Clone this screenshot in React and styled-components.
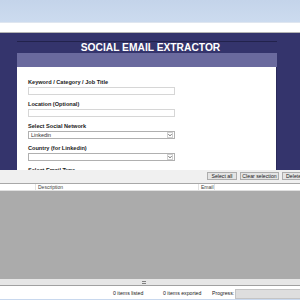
import styled, { createGlobalStyle } from "styled-components";

const FONT = `"Liberation Sans", Arial, sans-serif`;

const GlobalStyle = createGlobalStyle`
	*, *::before, *::after {
		box-sizing: border-box;
	}
	html, body {
		margin: 0;
		padding: 0;
		width: 300px;
		height: 300px;
		overflow: hidden;
		background: #ffffff;
		font-family: ${FONT};
	}
`;

const FIELDS = [
	{ label: "Keyword / Category / Job Title", kind: "input" },
	{ label: "Location (Optional)", kind: "input" },
	{ label: "Select Social Network", kind: "select", value: "Linkedin" },
	{ label: "Country (for Linkedin)", kind: "select", value: "" },
	{ label: "Select Email Type", kind: "input" },
];

function Chevron() {
	return (
		<svg width="5" height="4" viewBox="0 0 5 4">
			<path d="M0.5 1 L2.5 3 L4.5 1" fill="none" stroke="#404040" strokeWidth="1" />
		</svg>
	);
}

export default function App() {
	return (
		<Window>
			<GlobalStyle />
			<TitleBar />
			<MenuStrip />

			<Stage>
				<Panel>
					<Title>SOCIAL EMAIL EXTRACTOR</Title>
					<SubBand />
					<Form>
						{FIELDS.map((f) => (
							<Field key={f.label}>
								<Label>{f.label}</Label>
								{f.kind === "input" ? (
									<TextBox />
								) : (
									<SelectBox>
										<span>{f.value}</span>
										<ArrowBox>
											<Chevron />
										</ArrowBox>
									</SelectBox>
								)}
							</Field>
						))}
					</Form>
				</Panel>
			</Stage>

			<Toolbar>
				<ToolButton width="30px">Select all</ToolButton>
				<ToolButton width="39px">Clear selection</ToolButton>
				<ToolButton width="44px">Delete selected</ToolButton>
			</Toolbar>

			<ColumnHeader>
				<Column width="36px" />
				<Column width="163px">Description</Column>
				<Column>Email</Column>
			</ColumnHeader>

			<ListArea />

			<Splitter>
				<Grip />
			</Splitter>

			<StatusBar>
				<StatusText width="113px" />
				<StatusText width="50px">0 items listed</StatusText>
				<StatusText width="49px">0 items exported</StatusText>
				<StatusText width="23px">Progress:</StatusText>
				<Progress />
			</StatusBar>

			<BottomStrip />
		</Window>
	);
}

const Window = styled.div`
	width: 300px;
	height: 300px;
	display: flex;
	flex-direction: column;
	overflow: hidden;
	font-family: ${FONT};
`;

const TitleBar = styled.div`
	height: 23px;
	flex-shrink: 0;
	background: linear-gradient(#c4d4ea, #ccdbef);
	border-bottom: 1px solid #dfe6f0;
`;

const MenuStrip = styled.div`
	height: 10px;
	flex-shrink: 0;
	background: #ffffff;
	border-bottom: 1px solid #b4b4b4;
`;

const Stage = styled.div`
	height: 137px;
	flex-shrink: 0;
	background: #34346c;
	padding: 8px 23px 0 17px;
	overflow: hidden;
`;

const Panel = styled.div`
	display: flex;
	flex-direction: column;
	border-top: 1px solid #22224c;
	height: 100%;
`;

const Title = styled.div`
	height: 11px;
	flex-shrink: 0;
	line-height: 12px;
	text-align: center;
	color: #ffffff;
	font-weight: bold;
	font-size: 10.25px;
	padding-left: 7px;
`;

const SubBand = styled.div`
	height: 14px;
	flex-shrink: 0;
	background: #6a6a9e;
`;

const Form = styled.div`
	flex: 1;
	background: #ffffff;
	padding: 12px 0 0 11px;
	display: flex;
	flex-direction: column;
	gap: 6px;
	border-right: 1px solid #2a2a5a;
`;

const Field = styled.div`
	display: flex;
	flex-direction: column;
	gap: 1px;
`;

const Label = styled.div`
	height: 7px;
	line-height: 7px;
	font-size: 5.6px;
	font-weight: bold;
	color: #1a1a1a;
	white-space: nowrap;
`;

const TextBox = styled.div`
	width: 147px;
	height: 8px;
	border: 1px solid #d6d6d6;
	background: #ffffff;
`;

const SelectBox = styled.div`
	width: 147px;
	height: 8px;
	border: 1px solid #b0b0b0;
	background: #ffffff;
	display: flex;
	align-items: center;
	justify-content: space-between;
	font-size: 5.4px;
	color: #303030;
	padding-left: 2px;
`;

const ArrowBox = styled.div`
	width: 6px;
	height: 6px;
	margin-right: 1px;
	display: flex;
	align-items: center;
	justify-content: center;
	border: 1px solid #d0d0d0;
`;

const Toolbar = styled.div`
	height: 14px;
	flex-shrink: 0;
	background: #f0f0f0;
	display: flex;
	align-items: flex-start;
	padding: 2px 0 0 207px;
	gap: 3px;
	border-bottom: 1px solid #a8a8a8;
	white-space: nowrap;
`;

const ToolButton = styled.div`
	width: ${(p) => p.width};
	height: 8px;
	flex-shrink: 0;
	overflow: hidden;
	border: 1px solid #adadad;
	background: #e4e4e4;
	font-size: 5.2px;
	line-height: 6px;
	text-align: center;
	color: #202020;
`;

const ColumnHeader = styled.div`
	height: 7px;
	flex-shrink: 0;
	background: #ffffff;
	display: flex;
	border-bottom: 1px solid #e0e0e0;
`;

const Column = styled.div`
	width: ${(p) => p.width || "auto"};
	flex-shrink: 0;
	border-right: 1px solid #e2e2e2;
	padding-left: 2px;
	font-size: 5px;
	line-height: 6px;
	color: #404040;
`;

const ListArea = styled.div`
	height: 88px;
	flex-shrink: 0;
	background: #ababab;
`;

const Splitter = styled.div`
	height: 7px;
	flex-shrink: 0;
	background: #e6e6e6;
	border-bottom: 1px solid #a0a0a0;
	display: flex;
	align-items: center;
	padding-left: 142px;
`;

const Grip = styled.div`
	width: 4px;
	height: 3px;
	background: repeating-linear-gradient(#808080 0 1px, transparent 1px 2px);
`;

const StatusBar = styled.div`
	height: 13px;
	flex-shrink: 0;
	background: #ffffff;
	display: flex;
	align-items: center;
	font-size: 5.2px;
	color: #202020;
	white-space: nowrap;
`;

const StatusText = styled.div`
	width: ${(p) => p.width};
	flex-shrink: 0;
`;

const Progress = styled.div`
	flex: 1;
	height: 10px;
	margin-top: 2px;
	background: #dedede;
	border: 1px solid #c4c4c4;
	border-right: none;
`;

const BottomStrip = styled.div`
	flex: 1;
	background: #c8d8ee;
`;
